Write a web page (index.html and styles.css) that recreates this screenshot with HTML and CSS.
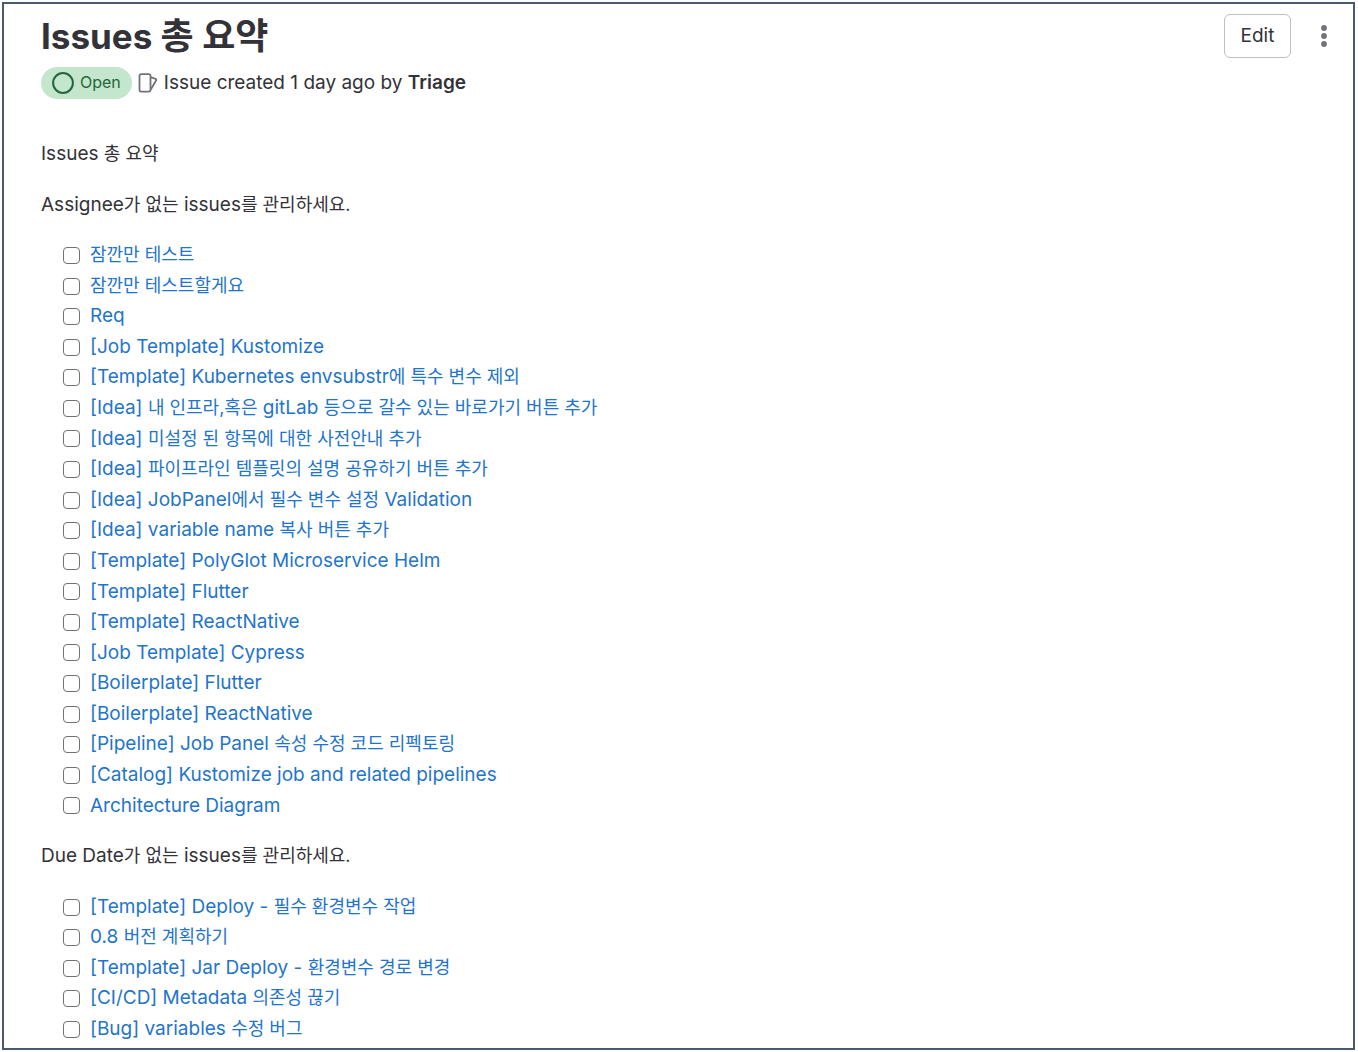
FILE: index.html
```html
<!DOCTYPE html>
<html lang="ko">
<head>
<meta charset="utf-8">
<meta name="viewport" content="width=device-width, initial-scale=1">
<title>Issues 총 요약</title>
<link rel="stylesheet" href="styles.css">
</head>
<body>
<main class="issue">
  <header class="issue-header">
    <h1 class="title">Issues <span class="ko">총 요약</span></h1>
    <div class="actions">
      <button class="edit" type="button">Edit</button>
      <button class="more" type="button" aria-label="More actions">
        <svg width="8" height="24" viewBox="0 0 8 24" fill="#737278"><circle cx="4" cy="4" r="2.9"/><circle cx="4" cy="12" r="2.9"/><circle cx="4" cy="20" r="2.9"/></svg>
      </button>
    </div>
  </header>
  <div class="meta">
    <span class="badge">
      <svg width="22" height="22" viewBox="0 0 22 22" fill="none" stroke="#24663b" stroke-width="2"><circle cx="11" cy="11" r="9.9"/></svg>
      Open
    </span>
    <svg class="type-icon" width="20" height="20" viewBox="0 0 20 20" fill="none" stroke="#737278" stroke-width="1.8" stroke-linejoin="round"><rect x="1.5" y="1.2" width="11" height="17.4" rx="1.8"/><path d="M12.6 4.2l5 1.7q1 .5.6 1.4l-5.4 9.2"/></svg>
    <span>Issue created 1 day ago by <strong>Triage</strong></span>
  </div>
  <div class="description">
    <p>Issues <span class="ko">총 요약</span></p>
    <p>Assignee<span class="ko">가 없는</span> issues<span class="ko">를 관리하세요.</span></p>
    <ul class="tasks">
      <li><input type="checkbox" aria-labelledby="a1"><a id="a1" href="#a1"><span class="ko">잠깐만 테스트</span></a></li>
      <li><input type="checkbox" aria-labelledby="a2"><a id="a2" href="#a2"><span class="ko">잠깐만 테스트할게요</span></a></li>
      <li><input type="checkbox" aria-labelledby="a3"><a id="a3" href="#a3">Req</a></li>
      <li><input type="checkbox" aria-labelledby="a4"><a id="a4" href="#a4">[Job Template] Kustomize</a></li>
      <li><input type="checkbox" aria-labelledby="a5"><a id="a5" href="#a5">[Template] Kubernetes envsubstr<span class="ko">에 특수 변수 제외</span></a></li>
      <li><input type="checkbox" aria-labelledby="a6"><a id="a6" href="#a6">[Idea] <span class="ko">내 인프라,혹은</span> gitLab <span class="ko">등으로 갈수 있는 바로가기 버튼 추가</span></a></li>
      <li><input type="checkbox" aria-labelledby="a7"><a id="a7" href="#a7">[Idea] <span class="ko">미설정 된 항목에 대한 사전안내 추가</span></a></li>
      <li><input type="checkbox" aria-labelledby="a8"><a id="a8" href="#a8">[Idea] <span class="ko">파이프라인 템플릿의 설명 공유하기 버튼 추가</span></a></li>
      <li><input type="checkbox" aria-labelledby="a9"><a id="a9" href="#a9">[Idea] JobPanel<span class="ko">에서 필수 변수 설정</span> Validation</a></li>
      <li><input type="checkbox" aria-labelledby="a10"><a id="a10" href="#a10">[Idea] variable name <span class="ko">복사 버튼 추가</span></a></li>
      <li><input type="checkbox" aria-labelledby="a11"><a id="a11" href="#a11">[Template] PolyGlot Microservice Helm</a></li>
      <li><input type="checkbox" aria-labelledby="a12"><a id="a12" href="#a12">[Template] Flutter</a></li>
      <li><input type="checkbox" aria-labelledby="a13"><a id="a13" href="#a13">[Template] ReactNative</a></li>
      <li><input type="checkbox" aria-labelledby="a14"><a id="a14" href="#a14">[Job Template] Cypress</a></li>
      <li><input type="checkbox" aria-labelledby="a15"><a id="a15" href="#a15">[Boilerplate] Flutter</a></li>
      <li><input type="checkbox" aria-labelledby="a16"><a id="a16" href="#a16">[Boilerplate] ReactNative</a></li>
      <li><input type="checkbox" aria-labelledby="a17"><a id="a17" href="#a17">[Pipeline] Job Panel <span class="ko">속성 수정 코드 리펙토링</span></a></li>
      <li><input type="checkbox" aria-labelledby="a18"><a id="a18" href="#a18">[Catalog] Kustomize job and related pipelines</a></li>
      <li><input type="checkbox" aria-labelledby="a19"><a id="a19" href="#a19">Architecture Diagram</a></li>
    </ul>
    <p>Due Date<span class="ko">가 없는</span> issues<span class="ko">를 관리하세요.</span></p>
    <ul class="tasks">
      <li><input type="checkbox" aria-labelledby="d1"><a id="d1" href="#d1">[Template] Deploy - <span class="ko">필수 환경변수 작업</span></a></li>
      <li><input type="checkbox" aria-labelledby="d2"><a id="d2" href="#d2">0.8 <span class="ko">버전 계획하기</span></a></li>
      <li><input type="checkbox" aria-labelledby="d3"><a id="d3" href="#d3">[Template] Jar Deploy - <span class="ko">환경변수 경로 변경</span></a></li>
      <li><input type="checkbox" aria-labelledby="d4"><a id="d4" href="#d4">[CI/CD] Metadata <span class="ko">의존성 끊기</span></a></li>
      <li><input type="checkbox" aria-labelledby="d5"><a id="d5" href="#d5">[Bug] variables <span class="ko">수정 버그</span></a></li>
    </ul>
  </div>
</main>
</body>
</html>
```
FILE: styles.css
```css
* { box-sizing: border-box; }

body {
  margin: 0;
  padding: 2px 3px 2px 2px;
  background: #fff;
  color: #333238;
  font-family: Inter, "Noto Sans CJK KR", sans-serif;
  font-size: 19px;
  line-height: 1.61;
}

.issue {
  min-height: calc(100vh - 4px);
  padding: 10px 18px 0 37px;
  border: 2px solid #4a5972;
}

.issue-header {
  display: flex;
  justify-content: space-between;
  align-items: flex-start;
}

.title {
  margin: 0;
  font-size: 35px;
  font-weight: 700;
  line-height: 44px;
}

.title .ko { font-size: 36px; }

.actions {
  display: flex;
  align-items: center;
  gap: 22px;
}

.edit {
  width: 67px;
  height: 44px;
  padding: 0;
  border: 1px solid #bfbfc3;
  border-radius: 6px;
  background: #fff;
  color: #333238;
  font: inherit;
}

.more {
  display: flex;
  justify-content: center;
  width: 22px;
  padding: 10px 0;
  border: 0;
  background: none;
}

.meta {
  display: flex;
  align-items: center;
  gap: 6px;
  margin-top: 9px;
}

.badge {
  display: flex;
  align-items: center;
  gap: 6px;
  height: 32px;
  padding: 0 11px;
  border-radius: 16px;
  background: #c3e6cd;
  color: #24663b;
  font-size: 16px;
}

.meta strong { font-weight: 600; }

.description { margin-top: 40px; }

.description p { margin: 0 0 20px; }

.ko { font-size: 18px; line-height: 1; }

.tasks {
  margin: 0 0 20px;
  padding: 0 0 0 22px;
  list-style: none;
}

.tasks:last-child { margin-bottom: 0; }

.tasks li {
  display: flex;
  align-items: center;
  gap: 10px;
}

.tasks input {
  appearance: none;
  flex: none;
  width: 17px;
  height: 17px;
  margin: 0;
  border: 1px solid #737278;
  border-radius: 4px;
  background: #fff;
}

.tasks a {
  color: #1f75cb;
  text-decoration: none;
}
```
